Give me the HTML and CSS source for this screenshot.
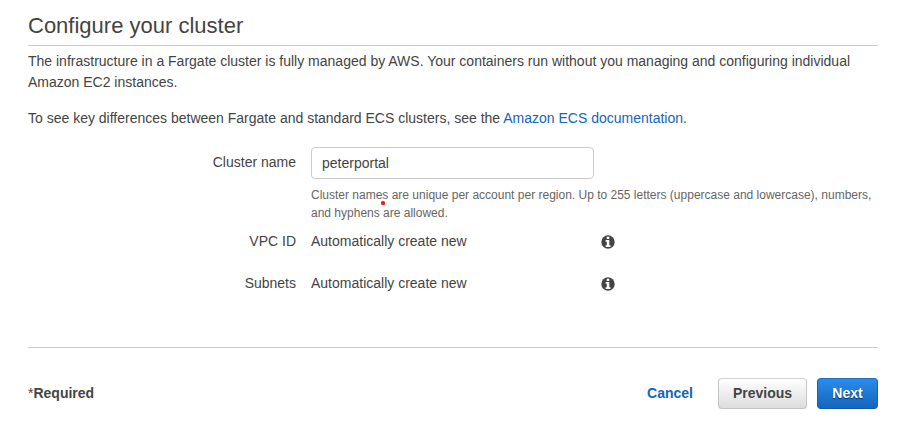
FILE: index.html
```html
<!DOCTYPE html>
<html lang="en">
<head>
<meta charset="utf-8">
<title>Configure your cluster</title>
<link rel="stylesheet" href="styles.css">
</head>
<body>
<main class="page">
  <h1 class="title">Configure your cluster</h1>
  <p class="intro">The infrastructure in a Fargate cluster is fully managed by AWS. Your containers run without you managing and configuring individual Amazon EC2 instances.</p>
  <p class="intro">To see key differences between Fargate and standard ECS clusters, see the <a class="link" href="#">Amazon ECS documentation</a>.</p>
  <form class="form">
    <div class="row row-name">
      <label class="label" for="name">Cluster name</label>
      <div class="field">
        <input class="input" id="name" type="text" value="peterportal">
        <p class="hint">Cluster names are unique per account per region. Up to 255 letters (uppercase and lowercase), numbers, and hyphens are allowed.<span class="dot"></span></p>
      </div>
    </div>
    <div class="row">
      <span class="label">VPC ID</span>
      <span class="value">Automatically create new</span>
      <svg class="info" viewBox="0 0 14 14"><circle cx="7" cy="7" r="6.7" fill="#444"/><path d="M5.7 1.8h2.6v2.2H5.7zM4.6 5h3.7v5.2h1.2V12H4.6v-1.8h1.2V6.7H4.6z" fill="#fff"/></svg>
    </div>
    <div class="row">
      <span class="label">Subnets</span>
      <span class="value">Automatically create new</span>
      <svg class="info" viewBox="0 0 14 14"><circle cx="7" cy="7" r="6.7" fill="#444"/><path d="M5.7 1.8h2.6v2.2H5.7zM4.6 5h3.7v5.2h1.2V12H4.6v-1.8h1.2V6.7H4.6z" fill="#fff"/></svg>
    </div>
  </form>
  <footer class="footer">
    <span class="required"><span class="star">*</span>Required</span>
    <a class="cancel" href="#">Cancel</a>
    <button class="button">Previous</button>
    <button class="button primary">Next</button>
  </footer>
</main>
</body>
</html>
```
FILE: styles.css
```css
* { box-sizing: border-box; }
body {
  margin: 0;
  background: #fff;
  color: #444;
  font: 14px/21px "Liberation Sans", Arial, sans-serif;
}
.page { width: 850px; margin-left: 28px; padding-top: 11px; }
.title {
  margin: 0 0 5px;
  height: 35px;
  border-bottom: 1px solid #ccc;
  font-size: 22px;
  font-weight: 400;
  line-height: 30px;
}
.intro { margin: 0 0 15px; }
.link { color: #1166bb; text-decoration: none; }
.form { margin-top: 18px; }
.row { display: flex; height: 42px; }
.row-name { height: 84px; }
.label { width: 268px; margin-right: 15px; text-align: right; }
.row-name .label { padding-top: 5px; }
.field { width: 567px; }
.input {
  display: block;
  width: 283px;
  height: 32px;
  padding: 0 10px;
  border: 1px solid #ccc;
  border-radius: 4px;
  color: #444;
  font: inherit;
}
.hint { position: relative; margin: 7px 0 0; font-size: 12px; line-height: 18px; color: #666; }
.dot { position: absolute; left: 70px; top: 15px; width: 4px; height: 4px; border-radius: 1.5px; background: #ed1c24; }
.value { width: 290px; }
.info { width: 14px; height: 14px; margin-top: 4px; }
.footer {
  display: flex;
  align-items: center;
  height: 92px;
  margin-top: 32px;
  border-top: 1px solid #ccc;
  font-weight: 700;
}
.required { margin-right: auto; }
.star { font-weight: 400; }
.cancel { margin-right: 25px; color: #1166bb; text-decoration: none; }
.button {
  width: 89px;
  height: 31px;
  margin-right: 10px;
  padding: 0;
  border: 1px solid #c4c4c4;
  border-top-color: #d4d4d4;
  border-radius: 4px;
  background: linear-gradient(#fff, #ddd);
  color: #444;
  font: inherit;
}
.primary {
  width: 61px;
  margin-right: 0;
  border-color: #1c6fc4 #1763b4 #1558a4;
  background: linear-gradient(#2c8cea, #1465bd);
  color: #fff;
  text-shadow: 0 1px 1px rgba(0, 0, 0, 0.6);
}
```
